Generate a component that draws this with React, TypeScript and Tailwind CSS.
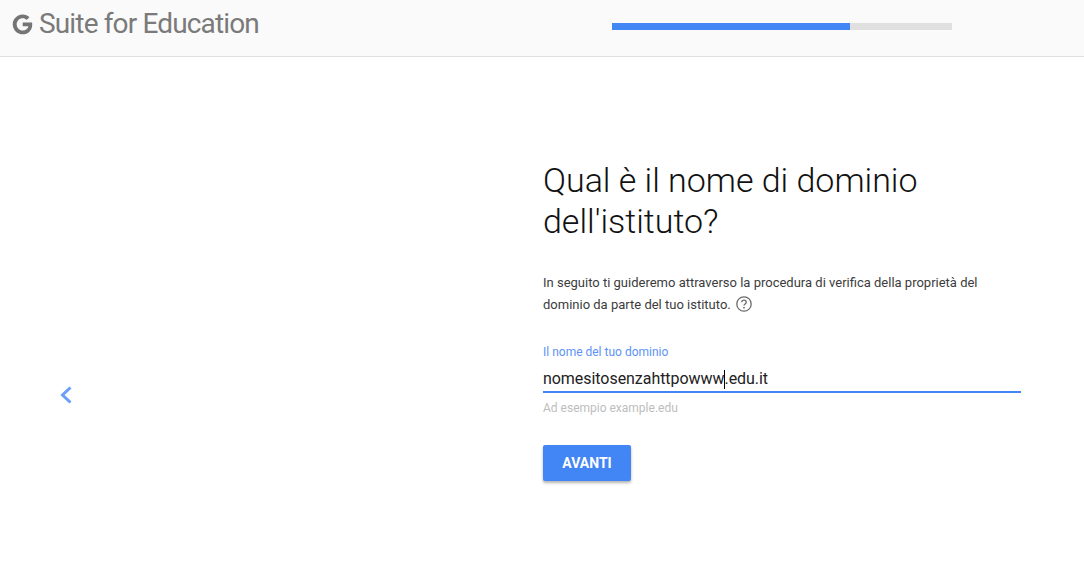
export default function App() {
  return (
    <div className="w-[1084px] h-[566px] bg-white overflow-hidden font-['Roboto',sans-serif]">
      <header className="h-[57px] bg-[#fafafa] border-b border-[#e0e0e0] flex items-start">
        <div className="w-[612px] pl-[11px] pt-[6px] flex items-center shrink-0">
          <svg width="23" height="23" viewBox="0 0 21 21" className="mr-[5px] shrink-0">
            <path d="M10.7 8.7v3.4h5.2c-.4 2.4-2.4 3.8-5.2 3.8-3.1 0-5.5-2.500-5.500-5.500s2.400-5.500 5.500-5.500c1.400 0 2.700.5 3.600 1.400l2.500-2.500C15.300 2.400 13.200 1.400 10.700 1.400 5.700 1.400 1.600 5.400 1.600 10.400s4.100 9 9.100 9c4.700 0 8.700-3.300 8.700-9 0-.6-.1-1.200-.2-1.700z" fill="#757575" />
          </svg>
          <span className="text-[28px] leading-[36px] text-[#7a7a7a] tracking-[-0.85px]">Suite for Education</span>
        </div>
        <div className="w-[340px] h-[7px] mt-[23px] bg-[#e0e0e0] shrink-0">
          <div className="w-[238px] h-full bg-[#4285f4]" />
        </div>
      </header>
      <main className="flex h-[509px]">
        <div className="w-[543px] shrink-0 pl-[60px] pt-[329px]">
          <svg width="12" height="18" viewBox="0 0 12 18" fill="none">
            <path d="M10.500 1.500 2.500 9l8 7.500" stroke="#6a9ff7" strokeWidth="3" />
          </svg>
        </div>
        <div className="w-[478px] pt-[103px]">
          <h1 className="text-[34px] leading-[41px] font-light text-[#111111] tracking-[-0.02px]">Qual è il nome di dominio dell'istituto?</h1>
          <div className="mt-[30px] text-[13px] leading-[22px] text-[#3c3c3c]">
            <p>In seguito ti guideremo attraverso la procedura di verifica della proprietà del</p>
            <p className="flex items-center">
              dominio da parte del tuo istituto.
              <svg width="16" height="16" viewBox="0 0 16 16" className="ml-[5px] mb-[3px]" fill="none">
                <circle cx="8" cy="8" r="7.200" stroke="#6b6b6b" strokeWidth="1.300" />
                <path d="M5.800 6.300C5.800 5 6.800 4.200 8 4.200s2.200.8 2.200 2c0 1.700-2.200 1.700-2.200 3.400" stroke="#6b6b6b" strokeWidth="1.300" />
                <circle cx="8" cy="11.700" r=".9" fill="#6b6b6b" />
              </svg>
            </p>
          </div>
          <div className="mt-[29px] text-[12px] leading-[14px] text-[#5c93f5]">Il nome del tuo dominio</div>
          <div className="mt-[9px] h-[25px] border-b-2 border-[#4285f4] text-[16px] leading-[22px] text-[#212121] flex tracking-[-0.05px]">
            <span>nomesitosenzahttpowww</span>
            <span className="w-px h-[19px] bg-black mt-[2px] -mr-px" />
            <span>.edu.it</span>
          </div>
          <div className="mt-[8px] text-[12px] leading-[14px] text-[#bdbdbd]">Ad esempio example.edu</div>
          <button className="mt-[30px] block w-[88px] h-[36px] rounded-[2px] bg-[#4285f4] text-white text-[14px] font-bold shadow-[0_2px_3px_rgba(0,0,0,0.3)]">AVANTI</button>
        </div>
      </main>
    </div>
  );
}
